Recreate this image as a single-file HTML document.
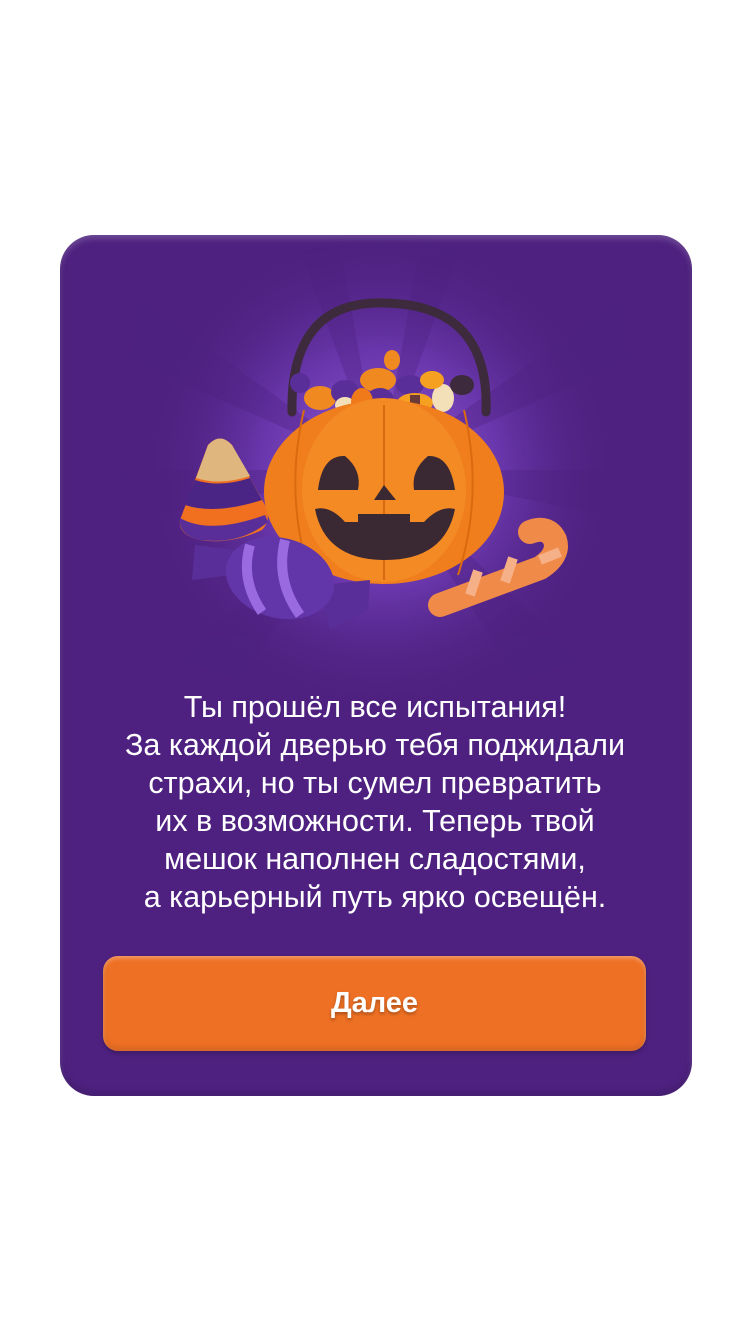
<!DOCTYPE html>
<html><head><meta charset="utf-8"><style>
html,body{margin:0;padding:0;background:#fff;width:750px;height:1334px;overflow:hidden;font-family:"Liberation Sans",sans-serif}
.card{position:absolute;left:60px;top:235px;width:632px;height:861px;border-radius:34px;background:#4e2180;box-shadow:inset 0 4px 6px rgba(255,255,255,.18),inset 0 -4px 8px rgba(0,0,0,.15);overflow:hidden}
.rays{position:absolute;left:0;top:0}
.txt{position:absolute;left:0;width:750px;top:688px;text-align:center;color:#fff;font-size:30.5px;line-height:38px;letter-spacing:0}
.btn{position:absolute;left:103px;top:956px;width:543px;height:95px;border-radius:15px;background:#ee7024;box-shadow:inset 0 2px 4px rgba(255,255,255,.35),inset 0 -3px 6px rgba(0,0,0,.12),0 3px 4px rgba(0,0,0,.2);color:#fff;font-weight:bold;font-size:29px;text-align:center;line-height:95px;text-shadow:0 2px 3px rgba(0,0,0,.3)}
</style></head><body>
<div class="card"></div>
<svg class="rays" width="750" height="1334" viewBox="0 0 750 1334">
<defs>
<radialGradient id="g" cx="380" cy="470" r="240" gradientUnits="userSpaceOnUse">
<stop offset="0" stop-color="#9a66e0" stop-opacity="1"/><stop offset=".5" stop-color="#7b45c8" stop-opacity=".6"/><stop offset="1" stop-color="#4e2180" stop-opacity="0"/></radialGradient>
<clipPath id="c"><rect x="60" y="235" width="632" height="861" rx="34"/></clipPath>
</defs>
<g clip-path="url(#c)">
<circle cx="380" cy="470" r="240" fill="url(#g)"/>
<g fill="#4e2180" opacity=".35">
<path d="M380 470 L140 300 L130 360Z"/><path d="M380 470 L620 300 L630 360Z"/><path d="M380 470 L120 470 L130 520Z"/><path d="M380 470 L640 470 L630 520Z"/><path d="M380 470 L180 660 L240 680Z"/><path d="M380 470 L580 660 L520 680Z"/><path d="M380 470 L300 250 L340 245Z"/><path d="M380 470 L460 250 L420 245Z"/>
</g>
</g>
<!-- handle -->
<path d="M292 412 Q290 300 385 303 Q490 305 486 412" fill="none" stroke="#3d2a3c" stroke-width="9" stroke-linecap="round"/>
<!-- candies in basket -->
<circle cx="300" cy="383" r="10" fill="#5a2e98"/>
<ellipse cx="320" cy="398" rx="16" ry="12" fill="#f08a20"/>
<ellipse cx="345" cy="392" rx="14" ry="12" fill="#5a2e98"/>
<ellipse cx="345" cy="405" rx="10" ry="8" fill="#f3e0b8"/>
<ellipse cx="378" cy="380" rx="18" ry="12" fill="#f08a20"/>
<ellipse cx="380" cy="400" rx="14" ry="12" fill="#5a2e98"/>
<ellipse cx="362" cy="402" rx="11" ry="14" fill="#f07a1a"/>
<ellipse cx="410" cy="385" rx="14" ry="10" fill="#5a2e98"/>
<ellipse cx="415" cy="403" rx="18" ry="10" fill="#f5a020"/>
<rect x="410" y="395" width="10" height="18" fill="#6a3a38"/>
<ellipse cx="443" cy="398" rx="11" ry="14" fill="#f3e0b8"/>
<ellipse cx="432" cy="380" rx="12" ry="9" fill="#f5a020"/>
<ellipse cx="462" cy="385" rx="12" ry="10" fill="#3d2a3c"/>
<ellipse cx="392" cy="360" rx="8" ry="10" fill="#f08a20"/>
<!-- candy corn -->
<path d="M180 520 Q178 535 200 540 Q230 545 262 530 Q272 520 265 505 L232 445 Q220 432 208 445 Z" fill="#f07020"/>
<path d="M185 505 Q215 515 262 500 L250 478 Q220 488 195 480 Z" fill="#4a2585"/>
<path d="M196 478 Q220 486 250 476 L232 445 Q220 432 208 445 Z" fill="#deb67e"/>
<path d="M180 518 Q210 535 265 515 L268 522 Q240 545 200 540 Q178 535 180 518Z" fill="#5a2e98"/>
<!-- pumpkin -->
<ellipse cx="384" cy="492" rx="120" ry="92" fill="#f07e1c"/>
<ellipse cx="384" cy="490" rx="82" ry="92" fill="#f48a24"/>
<path d="M384 405 V580" stroke="#d96a10" stroke-width="2"/>
<path d="M304 410 Q284 495 310 575 M464 410 Q484 495 458 575" stroke="#d96a10" stroke-width="2" fill="none"/>
<!-- face -->
<path d="M318 490 Q322 455 345 456 Q362 470 358 490Z" fill="#3a2832"/>
<path d="M455 490 Q450 455 428 456 Q411 470 414 490Z" fill="#3a2832"/>
<path d="M374 500 L384 485 L396 500Z" fill="#3a2832"/>
<path d="M315 509 Q330 505 345 522 H358 V514 H410 V522 H424 Q440 505 455 509 Q445 560 385 560 Q325 560 315 509Z" fill="#3a2832"/>
<!-- wrapped candy -->
<path d="M195 545 L235 550 L232 575 L192 580 Z" fill="#5a2e98"/>
<path d="M320 585 L370 580 L368 610 L330 630 Z" fill="#5a2e98"/>
<ellipse cx="280" cy="578" rx="55" ry="40" transform="rotate(15 280 578)" fill="#6236a8"/>
<path d="M250 545 Q240 580 262 612" stroke="#9a6ae0" stroke-width="10" fill="none"/>
<path d="M285 540 Q275 580 300 615" stroke="#9a6ae0" stroke-width="10" fill="none"/>
<!-- cane -->
<path d="M440 605 L540 568 Q560 555 555 540 Q548 525 530 532" fill="none" stroke="#f08a48" stroke-width="24" stroke-linecap="round"/>
<path d="M470 595 l8 -24 M505 582 l8 -24 M540 560 l20 -8" stroke="#f6b088" stroke-width="10"/>
</svg>
<div class="txt">Ты прошёл все испытания!<br>За каждой дверью тебя поджидали<br>страхи, но ты сумел превратить<br>их в возможности. Теперь твой<br>мешок наполнен сладостями,<br>а карьерный путь ярко освещён.</div>
<div class="btn">Далее</div>
</body></html>
